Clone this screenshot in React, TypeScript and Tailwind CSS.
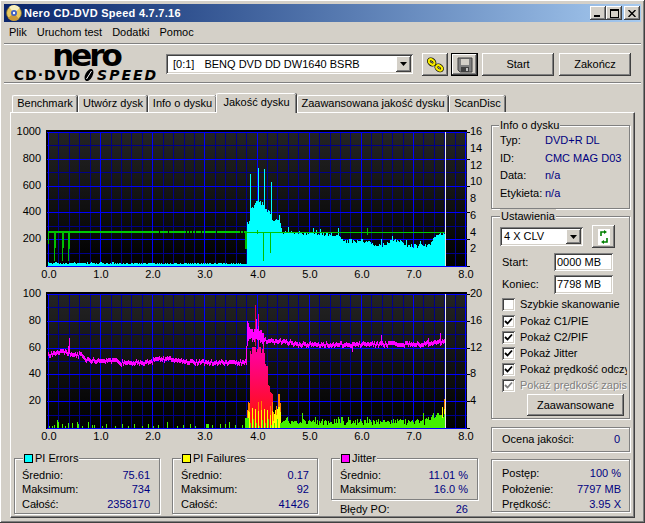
import type { ReactNode } from 'react';

const raised =
  'bg-[#d4d0c8] shadow-[inset_-1px_-1px_0_#404040,inset_1px_1px_0_#ffffff,inset_-2px_-2px_0_#808080,inset_2px_2px_0_#d4d0c8]';
const sunken =
  'bg-white shadow-[inset_1px_1px_0_#808080,inset_-1px_-1px_0_#ffffff,inset_2px_2px_0_#404040,inset_-2px_-2px_0_#d4d0c8]';
const etched = 'relative border border-[#808080] shadow-[1px_1px_0_#ffffff,inset_1px_1px_0_#ffffff]';

// deterministic noise so the traces never change between renders
let seed = 4711;
const rnd = () => {
  seed = (seed * 16807) % 2147483647;
  return seed / 2147483647;
};

const lerp = (pts: number[][], x: number) => {
  for (let i = 1; i < pts.length; i++) {
    if (x <= pts[i][0]) {
      const [x0, y0] = pts[i - 1];
      const [x1, y1] = pts[i];
      return y0 + ((y1 - y0) * (x - x0)) / (x1 - x0 || 1);
    }
  }
  return pts[pts.length - 1][1];
};

const bar = (x: number, top: number, bottom: number) => `M${x + 0.5} ${Math.round(top)}V${Math.round(bottom)}`;

/* ---------- chart 1 data ---------- */
const cyanPts = [
  [247, 222], [250, 222], [251, 208], [254, 203], [256, 201], [258, 200], [262, 203], [265, 208], [270, 212],
  [273, 220], [278, 220], [280, 222], [282, 231], [320, 233], [335, 234], [341, 238], [345, 240], [365, 240],
  [372, 242], [378, 245], [385, 243], [392, 239], [400, 241], [410, 245], [428, 245], [432, 240], [438, 233], [446, 231],
];
const cyanSpikes: Record<number, number> = {
  250: 173, 258: 167, 264: 168, 271: 181, 279: 214, 288: 226, 313: 227, 338: 227, 316: 229, 320: 228,
  392: 235, 381: 238, 406: 239, 420: 240,
};
let cyan = '';
for (let x = 48; x < 247; x++) cyan += bar(x, x < 120 ? 261 + Math.round(rnd() * 2) : 262 + Math.round(rnd()), 265);
for (let x = 247; x < 446; x++) {
  const base = lerp(cyanPts, x) + (rnd() - 0.5) * 4;
  cyan += bar(x, cyanSpikes[x] ?? base, 265);
}
let greenTrace = 'M48 230.5H157';
for (let x = 157; x < 246; x += 3) greenTrace += `M${x} 230.5h${rnd() > 0.25 ? 3 : 1.5}`;
const greenDips = [
  [48.5, 231, 243], [54.5, 231, 260], [55.5, 231, 247], [62.5, 231, 260], [63.5, 231, 247],
  [68.5, 231, 260], [69.5, 231, 248], [245.5, 231, 248], [246.5, 231, 248], [263.5, 231, 260], [270.5, 231, 252],
  [367.5, 227, 234], [257.5, 229, 233],
];

/* ---------- chart 2 data ---------- */
const magentaPts = [
  [48, 354], [52, 353], [60, 351], [66, 351], [70, 354], [80, 354], [85, 358], [90, 360], [115, 360], [120, 362],
  [150, 361], [157, 358], [175, 358], [182, 361], [245, 362], [247, 332], [262, 336], [266, 340], [285, 341],
  [300, 344], [430, 343], [440, 341], [445, 341],
];
const magentaSpikes: Record<number, [number, number]> = {
  69: [337, 353], 68: [345, 355], 246: [345, 364], 247: [320, 345], 248: [322, 340], 256: [318, 338], 258: [325, 340],
  263: [332, 345], 381: [334, 345], 428: [337, 346], 440: [332, 345], 352: [341, 351],
};
let magenta = '';
for (let x = 48; x < 445; x++) {
  const y = lerp(magentaPts, x) + (rnd() - 0.5) * 3.4;
  const half = x > 247 && x < 263 ? 4 + rnd() * 3 : 2;
  const spike = magentaSpikes[x];
  magenta += spike ? bar(x, spike[0], spike[1]) : bar(x, y - half, y + half);
}

const redPts = [
  [250, 346], [255, 344], [262, 346], [263, 333], [264, 345], [265, 360], [267, 365], [268, 380], [270, 384], [272, 388],
];
let red = '';
for (let x = 250; x < 273; x++) {
  const top = x === 258 ? 313 : lerp(redPts, x) + rnd() * 8;
  red += bar(x, top, 427);
}
let yellow = '';
let orange = '';
let lime = '';
for (let x = 247; x < 281; x++) {
  const top = 400 + rnd() * 14;
  if (x % 3 === 0 || x > 271 || x < 250) {
    yellow += bar(x, top, 427);
    if (rnd() > 0.6 || x < 250) orange += bar(x, top - 3, top + 6);
  }
}
orange += bar(278, 393, 406) + bar(279, 393, 406) + bar(444, 398, 408) + bar(445, 398, 408);
yellow += bar(442, 406, 427) + bar(444, 408, 427) + bar(445, 408, 427);
const sparse = [
  [49, 2], [52, 2], [54, 3], [57, 8], [58, 6], [62, 4], [65, 2], [68, 5], [72, 5], [77, 6], [78, 4], [82, 2], [88, 6], [92, 3],
  [94, 3], [102, 2], [106, 4], [115, 2], [122, 4], [128, 2], [134, 4], [142, 2], [148, 4], [153, 2], [158, 3], [167, 6],
  [177, 2], [183, 3], [190, 4], [195, 2], [206, 4], [207, 4], [208, 4], [212, 3], [220, 4], [225, 4], [229, 6], [235, 3], [242, 3],
];
for (const [x, h] of sparse) lime += bar(x, 427 - h, 427);
for (let x = 245; x < 281; x++) if (x % 3 === 1 || x < 249) lime += bar(x, 427 - (x < 249 ? 10 : 2 + rnd() * 8), 427);
for (let x = 281; x < 446; x++) {
  let h = 3 + rnd() * 6 + (rnd() > 0.88 ? 3 : 0);
  if (x > 425 && x < 432) h += 3;
  if (x >= 432) h += 6;
  if (x === 302) h = 15;
  if (x === 423) h = 15;
  lime += bar(x, 427 - h, 427);
}

/* ---------- chart frame ---------- */
const vMain = [48, 100, 152, 204, 257, 309, 361, 413, 465];
const vMinor = Array.from({ length: 41 }, (_, i) => Math.round(48 + i * 10.43));

function Chart({ top, left, right, id, children }: {
  top: number;
  left: string[];
  right: string[];
  id: string;
  children: ReactNode;
}) {
  const rows = Array.from({ length: 11 }, (_, i) => Math.round(top + i * 13.4));
  const labelY = top + 146;
  return (
    <svg
      viewBox={`12 ${top - 9} 478 160`}
      className="block w-[478px] h-[160px]"
      fontFamily="'Liberation Sans', sans-serif"
      fontSize="11"
      fill="#000"
    >
      <defs>
        <linearGradient id={id} x1="0" y1="0" x2="0" y2="1">
          <stop offset="0" stopColor="#242424" />
          <stop offset="1" stopColor="#000000" />
        </linearGradient>
        <linearGradient id={`${id}red`} gradientUnits="userSpaceOnUse" x1="0" y1="355" x2="0" y2="415">
          <stop offset="0" stopColor="#ff0098" />
          <stop offset="1" stopColor="#ff1010" />
        </linearGradient>
      </defs>
      <rect x="46" y={top - 2} width="421" height="137" fill="#000" />
      <rect x="48" y={top} width="419" height="134" fill={`url(#${id})`} />
      <g shapeRendering="crispEdges" strokeWidth="1" fill="none">
        {vMinor.map((x) => <path key={x} d={`M${x + 0.5} ${top}V${top + 134}`} stroke="#000088" />)}
        {rows.map((y, i) => (i % 2 ? <path key={y} d={`M47 ${y + 0.5}H467`} stroke="#000088" /> : null))}
        {vMain.map((x) => <path key={x} d={`M${x + 0.5} ${top}V${top + 134}`} stroke="#0000ff" />)}
        {rows.map((y, i) => (i % 2 ? null : <path key={y} d={`M47 ${y + 0.5}H467`} stroke="#0000ff" />))}
        {children}
        <path d={`M445.5 ${top}V${top + 134}`} stroke="#e8e8e8" />
        {rows.map((y, i) => (i % 2 ? null : <path key={y} d={`M467 ${y + 0.5}H470`} stroke="#000" />))}
      </g>
      {left.map((t, i) => (
        <text key={t} x="41" y={top + 3 + Math.round(i * 26.8)} textAnchor="end">{t}</text>
      ))}
      {right.map((t, i) => (
        <text key={t} x="470" y={top + 3 + Math.round((i * 134) / (right.length === 8 ? 8 : 5))}>{t}</text>
      ))}
      {vMain.map((x, i) => (
        <text key={x} x={x + 1} y={labelY} textAnchor="middle">{`${i}.0`}</text>
      ))}
    </svg>
  );
}

/* ---------- bits of window furniture ---------- */
function Group({ title, swatch, titleLeft, className, children }: {
  title?: string;
  swatch?: string;
  titleLeft?: string;
  className: string;
  children: ReactNode;
}) {
  return (
    <div className={`${etched} ${className}`}>
      {title && (
        <div className={`absolute -top-[8px] flex items-center h-[14px] bg-[#d4d0c8] px-[1px] ${titleLeft ?? 'left-[8px]'}`}>
          {swatch && <span className={`w-[9px] h-[9px] border border-black mr-[2px] ${swatch}`} />}
          {title}
        </div>
      )}
      {children}
    </div>
  );
}

function Row({ label, value, className }: { label: string; value: string; className: string }) {
  return (
    <div className={`flex justify-between items-center whitespace-nowrap ${className}`}>
      <span>{label}</span>
      <span className="text-[#000080]">{value}</span>
    </div>
  );
}

function Stat({ label, value }: { label: string; value: string }) {
  return <Row label={label} value={value} className="h-[14.5px]" />;
}

function Check({ label, checked = true, disabled = false }: { label: string; checked?: boolean; disabled?: boolean }) {
  return (
    <div className="flex items-center h-[16px] pl-[10px]">
      <span className={`w-[13px] h-[13px] shrink-0 flex items-center justify-center ${sunken} ${disabled ? 'bg-[#d4d0c8]' : ''}`}>
        {checked && (
          <svg viewBox="0 0 9 9" className="w-[9px] h-[9px]">
            <path d="M1 4 L3.5 6.5 L8 1.5" fill="none" stroke={disabled ? '#808080' : '#000'} strokeWidth="1.8" />
          </svg>
        )}
      </span>
      <span className={`ml-[5px] w-[107px] overflow-hidden whitespace-nowrap ${disabled ? 'text-[#808080] [text-shadow:1px_1px_0_#ffffff]' : ''}`}>
        {label}
      </span>
    </div>
  );
}

function ComboArrow({ className }: { className: string }) {
  return (
    <span className={`flex items-center justify-center ${raised} ${className}`}>
      <svg viewBox="0 0 7 4" className="w-[7px] h-[4px]"><path d="M0 0H7L3.5 4Z" fill="#000" /></svg>
    </span>
  );
}

function Tab({ label, className, active }: { label: string; className: string; active?: boolean }) {
  return (
    <div
      className={`flex items-center justify-center whitespace-nowrap bg-[#d4d0c8] border-l border-t border-white rounded-t-[2px] shadow-[inset_-1px_0_0_#808080,1px_0_0_#404040] ${
        active ? 'relative z-10 h-[20px] -mb-px pb-[3px]' : 'h-[17px] pb-px'
      } ${className}`}
    >
      {label}
    </div>
  );
}

function AppIcon() {
  return (
    <svg viewBox="0 0 16 16" className="w-[16px] h-[16px] shrink-0">
      <circle cx="8" cy="8" r="7.5" fill="#e8c860" stroke="#7a6a30" strokeWidth="0.8" />
      <path d="M8 8L14 3A7.5 7.5 0 0 0 3 2Z" fill="#f8f0c0" />
      <path d="M8 8L2 13A7.5 7.5 0 0 0 13 14Z" fill="#c89838" />
      <circle cx="8" cy="8" r="3" fill="#4060c0" />
      <circle cx="8" cy="8" r="1.2" fill="#fff" />
    </svg>
  );
}

function WinButton({ children }: { children: ReactNode }) {
  return <div className={`w-[16px] h-[14px] flex items-center justify-center ${raised}`}>{children}</div>;
}

function App() {
  return (
    <div className="w-[645px] h-[523px] overflow-hidden bg-[#d4d0c8] p-[4px] text-[11px] leading-none text-black [font-family:'Liberation_Sans',sans-serif] shadow-[inset_-1px_-1px_0_#404040,inset_1px_1px_0_#ffffff,inset_-2px_-2px_0_#808080]">
      {/* title bar */}
      <div className="h-[18px] flex items-center pl-[2px] pr-[1px] bg-gradient-to-r from-[#0a246a] to-[#a6caf0]">
        <AppIcon />
        <span className="ml-[2px] font-bold text-white whitespace-nowrap tracking-[0.27px]">Nero CD-DVD Speed 4.7.7.16</span>
        <div className="ml-auto flex">
          <WinButton>
            <span className="w-[6px] h-[2px] bg-black mt-[6px] -ml-[2px]" />
          </WinButton>
          <WinButton>
            <span className="w-[9px] h-[9px] border border-black border-t-2" />
          </WinButton>
          <div className="ml-[2px]">
            <WinButton>
              <svg viewBox="0 0 8 7" className="w-[8px] h-[7px]">
                <path d="M0.5 0L7.5 7M7.5 0L0.5 7" stroke="#000" strokeWidth="1.4" />
              </svg>
            </WinButton>
          </div>
        </div>
      </div>

      {/* menu */}
      <div className="h-[20px] flex items-center pl-[5px] gap-[10px]">
        <span>Plik</span>
        <span>Uruchom test</span>
        <span>Dodatki</span>
        <span>Pomoc</span>
      </div>
      <div className="h-[2px] mt-px bg-[#808080] border-b border-white" />

      {/* toolbar */}
      <div className="h-[37px] flex items-start">
        <div className="w-[144px] ml-[10px] flex flex-col items-center shrink-0 [font-family:'DejaVu_Sans',sans-serif] font-bold whitespace-nowrap">
          <span className="text-[31px] leading-[23px] tracking-[-3px] h-[24px] mt-[-1px]">nero</span>
          <div className="flex items-center h-[12px] mt-[1px] text-[14px] leading-none">
            <span className="tracking-[1px]">CD·DVD</span>
            <svg viewBox="0 0 14 12" className="w-[14px] h-[12px] mx-[1px]">
              <ellipse cx="7" cy="6" rx="3.6" ry="6.6" transform="rotate(28 7 6)" fill="#000" />
              <path d="M4.5 10L9.5 2" stroke="#fff" strokeWidth="1" />
            </svg>
            <span className="italic tracking-[2px]">SPEED</span>
          </div>
        </div>
        <div className={`ml-[8px] mt-[9px] w-[247px] h-[20px] flex items-center pl-[7px] pr-[2px] whitespace-nowrap ${sunken}`}>
          <span>[0:1]</span>
          <span className="ml-[10px]">BENQ DVD DD DW1640 BSRB</span>
          <ComboArrow className="ml-auto w-[15px] h-[16px]" />
        </div>
        <button className={`ml-[9px] mt-[8px] w-[26px] h-[23px] flex items-center justify-center ${raised}`}>
          <svg viewBox="0 0 17 16" className="w-[17px] h-[16px]">
            <g fill="none" transform="rotate(38 8.5 8)">
              <ellipse cx="3.6" cy="8" rx="3.2" ry="2.2" stroke="#000" strokeWidth="3.6" />
              <ellipse cx="13.2" cy="8" rx="3.2" ry="2.2" stroke="#000" strokeWidth="3.6" />
              <ellipse cx="3.6" cy="8" rx="3.2" ry="2.2" stroke="#f8ec00" strokeWidth="2.2" />
              <ellipse cx="13.2" cy="8" rx="3.2" ry="2.2" stroke="#f8ec00" strokeWidth="2.2" />
            </g>
          </svg>
        </button>
        <button className={`ml-[3px] mt-[8px] w-[27px] h-[23px] flex items-center justify-center border border-black ${raised}`}>
          <svg viewBox="0 0 16 16" className="w-[16px] h-[16px]">
            <path d="M1 1H15V15H3L1 13Z" fill="#808080" stroke="#404040" />
            <rect x="4" y="2" width="8" height="6" fill="#d4d0c8" />
            <rect x="4" y="10" width="8" height="5" fill="#404040" />
            <rect x="9" y="11" width="2" height="3" fill="#c0c0c0" />
          </svg>
        </button>
        <button className={`ml-[4px] mt-[8px] w-[72px] h-[23px] flex items-center justify-center ${raised}`}>Start</button>
        <button className={`ml-[5px] mt-[8px] w-[72px] h-[23px] flex items-center justify-center ${raised}`}>Zakończ</button>
      </div>
      <div className="h-[2px] bg-[#808080] border-b border-white" />

      {/* tabs */}
      <div className="mx-[6px] mt-[9px]">
        <div className="h-[19px] flex items-end pl-[2px] gap-px">
          <Tab label="Benchmark" className="w-[65px]" />
          <Tab label="Utwórz dysk" className="w-[69px]" />
          <Tab label="Info o dysku" className="w-[68px]" />
          <Tab label="Jakość dysku" active className="w-[80px] -ml-px" />
          <Tab label="Zaawansowana jakość dysku" className="w-[151px]" />
          <Tab label="ScanDisc" className="w-[56px]" />
        </div>

        <div className="h-[406px] flex border-l border-t border-white border-r border-b border-r-[#404040] border-b-[#404040] shadow-[inset_-1px_-1px_0_#808080] pl-px pt-[10px]">
          {/* left column: charts and summaries */}
          <div className="w-[478px] shrink-0">
            <Chart top={131} id="bg1" left={['1000', '800', '600', '400', '200']} right={['16', '14', '12', '10', '8', '6', '4', '2']}>
              <path d={cyan} stroke="#00ffff" />
              <path d={greenTrace} stroke="#00c800" strokeWidth="2" />
              <path d="M246 231H445" stroke="#00c800" />
              {greenDips.map(([x, a, b]) => <path key={x} d={`M${x} ${a}V${b}`} stroke="#00c000" />)}
            </Chart>
            <div className="mt-[2px]">
              <Chart top={293} id="bg2" left={['100', '80', '60', '40', '20']} right={['20', '16', '12', '8', '4']}>
                <path d={red} stroke="url(#bg2red)" />
                <path d="M255.5 304V345" stroke="#e00050" />
                <path d={magenta} stroke="#ff00ff" />
                <path d={yellow} stroke="#ffff00" />
                <path d={orange} stroke="#ff8000" />
                <path d={lime} stroke="#44f000" />
              </Chart>
            </div>
            <div className="flex ml-[2px] mt-[13px] items-start">
              <Group title="PI Errors" swatch="bg-[#00ffff]" className="w-[146px] h-[56px] pt-[9px] pl-[7px] pr-[9px]">
                <Stat label="Średnio:" value="75.61" />
                <Stat label="Maksimum:" value="734" />
                <Stat label="Całość:" value="2358170" />
              </Group>
              <Group title="PI Failures" swatch="bg-[#ffff00]" className="ml-[12px] w-[146px] h-[56px] pt-[9px] pl-[8px] pr-[8px]">
                <Stat label="Średnio:" value="0.17" />
                <Stat label="Maksimum:" value="92" />
                <Stat label="Całość:" value="41426" />
              </Group>
              <div className="ml-[13px] w-[147px]">
                <Group title="Jitter" swatch="bg-[#ff00ff]" className="h-[42px] pt-[9px] pl-[8px] pr-[9px]">
                  <Stat label="Średnio:" value="11.01 %" />
                  <Stat label="Maksimum:" value="16.0 %" />
                </Group>
                <Row label="Błędy PO:" value="26" className="mt-[2px] h-[15px] pl-[9px] pr-[10px]" />
              </div>
            </div>
          </div>

          {/* right column: disc info and settings */}
          <div className="ml-px mt-[2px] w-[139px] shrink-0">
            <Group title="Info o dysku" titleLeft="left-[7px]" className="h-[84px] pt-[6px] pl-[8px]">
              {[
                ['Typ:', 'DVD+R DL'],
                ['ID:', 'CMC MAG D03'],
                ['Data:', 'n/a'],
                ['Etykieta:', 'n/a'],
              ].map(([k, v]) => (
                <div key={k} className="flex items-center h-[17.6px] whitespace-nowrap">
                  <span className="w-[45px]">{k}</span>
                  <span className="text-[#000080]">{v}</span>
                </div>
              ))}
            </Group>

            <Group title="Ustawienia" className="mt-[7px] h-[203px] pt-[10px]">
              <div className="flex items-start pl-[8px] h-[21px]">
                <div className={`w-[83px] h-[19px] flex items-center pl-[4px] pr-[2px] ${sunken}`}>
                  <span>4 X CLV</span>
                  <ComboArrow className="ml-auto w-[15px] h-[15px]" />
                </div>
                <button className={`ml-[9px] -mt-[2px] w-[23px] h-[23px] flex items-center justify-center ${raised}`}>
                  <svg viewBox="0 0 12 16" className="w-[12px] h-[16px]">
                    <rect width="12" height="16" fill="#fff" />
                    <path d="M3 7V3H7" fill="none" stroke="#008000" strokeWidth="1.6" />
                    <path d="M6 1L9 3L6 5Z" fill="#008000" />
                    <path d="M9 9V13H5" fill="none" stroke="#008000" strokeWidth="1.6" />
                    <path d="M6 11L3 13L6 15Z" fill="#008000" />
                  </svg>
                </button>
              </div>
              <div className="flex items-center pl-[10px] mt-[5px] h-[18px]">
                <span className="w-[52px]">Start:</span>
                <div className={`w-[59px] h-[18px] flex items-center pl-[3px] ${sunken}`}>0000 MB</div>
              </div>
              <div className="flex items-center pl-[10px] mt-[4px] h-[19px]">
                <span className="w-[52px]">Koniec:</span>
                <div className={`w-[59px] h-[19px] flex items-center pl-[3px] ${sunken}`}>7798 MB</div>
              </div>
              <div className="mt-[2px]">
                <Check label="Szybkie skanowanie" checked={false} />
              </div>
              <div className="mt-px">
                <Check label="Pokaż C1/PIE" />
                <Check label="Pokaż C2/PIF" />
                <Check label="Pokaż Jitter" />
                <Check label="Pokaż prędkość odczytu" />
                <Check label="Pokaż prędkość zapisu" disabled />
              </div>
              <button className={`ml-[35px] mt-px w-[97px] h-[22px] flex items-center justify-center ${raised}`}>Zaawansowane</button>
            </Group>

            <Group className="mt-[8px] h-[25px] flex items-center">
              <Row label="Ocena jakości:" value="0" className="w-full pl-[10px] pr-[9px]" />
            </Group>

            <Group className="mt-[7px] h-[53px] pt-[6px] pl-[10px] pr-[8px]">
              <Row label="Postęp:" value="100 %" className="h-[15.5px]" />
              <Row label="Położenie:" value="7797 MB" className="h-[15.5px]" />
              <Row label="Prędkość:" value="3.95 X" className="h-[15.5px]" />
            </Group>
          </div>
        </div>
      </div>
    </div>
  );
}

export default App;
